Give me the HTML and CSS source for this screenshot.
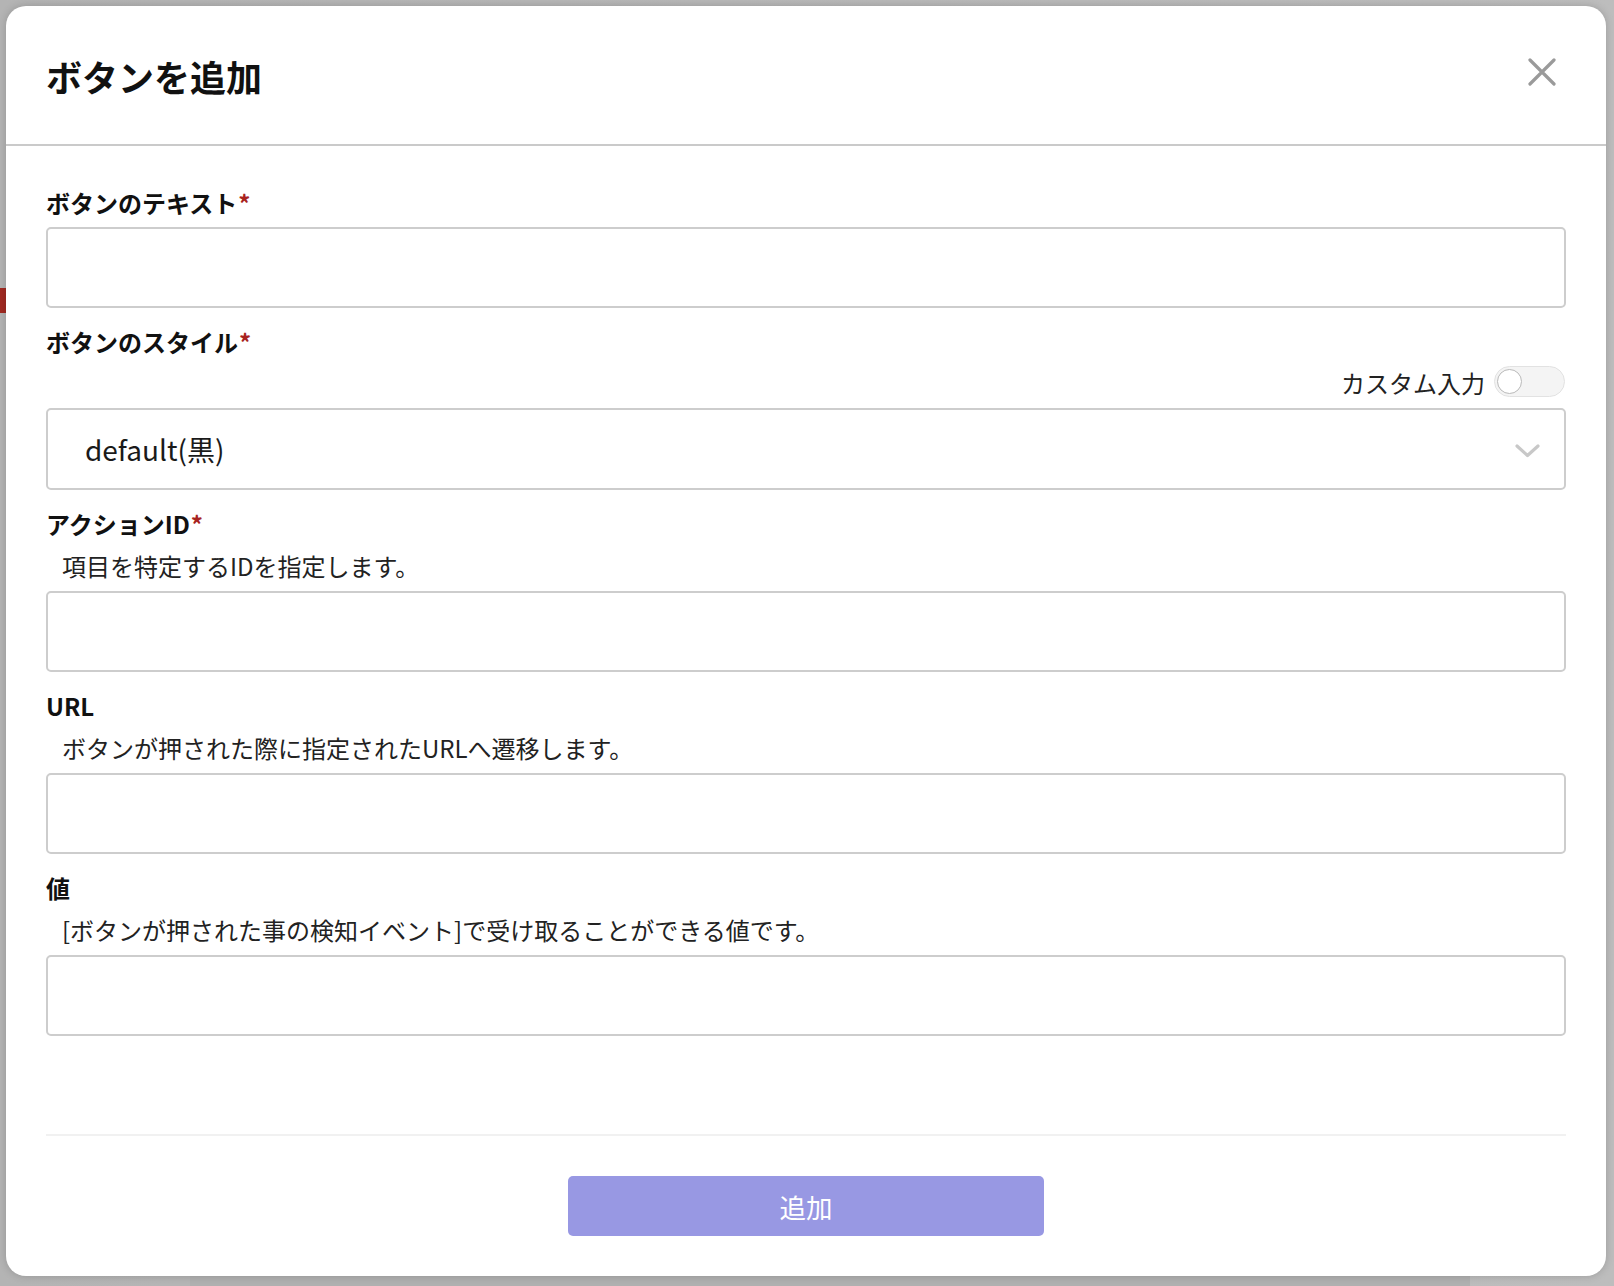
FILE: index.html
```html
<!DOCTYPE html>
<html lang="ja">
<head>
<meta charset="utf-8">
<title>ボタンを追加</title>
<link rel="stylesheet" href="styles.css">
</head>
<body>
<div class="backdrop">
  <div class="bg-badge"></div>
  <div class="bg-bottom"></div>
</div>
<div class="modal">
  <header class="modal-header">
    <h1 class="modal-title">ボタンを追加</h1>
    <button class="close-btn" aria-label="閉じる">
      <svg width="28" height="28" viewBox="0 0 28 28"><path d="M2 2 L26 26 M26 2 L2 26" stroke="#9a9a9a" stroke-width="3.2" stroke-linecap="round" fill="none"/></svg>
    </button>
  </header>
  <div class="modal-body">
    <div class="field first">
      <label class="label">ボタンのテキスト<span class="req">*</span></label>
      <div class="input"></div>
    </div>
    <div class="field">
      <label class="label">ボタンのスタイル<span class="req">*</span></label>
      <div class="toggle-row">
        <span class="toggle-text">カスタム入力</span>
        <span class="toggle"><span class="knob"></span></span>
      </div>
      <div class="select">
        <span class="select-value">default(黒)</span>
        <svg class="chevron" width="25" height="14" viewBox="0 0 25 14"><path d="M2 2 L12.5 11.5 L23 2" stroke="#c8c8c8" stroke-width="3.2" stroke-linecap="round" stroke-linejoin="round" fill="none"/></svg>
      </div>
    </div>
    <div class="field">
      <label class="label">アクションID<span class="req">*</span></label>
      <p class="desc">項目を特定するIDを指定します。</p>
      <div class="input"></div>
    </div>
    <div class="field">
      <label class="label">URL</label>
      <p class="desc">ボタンが押された際に指定されたURLへ遷移します。</p>
      <div class="input"></div>
    </div>
    <div class="field">
      <label class="label">値</label>
      <p class="desc">[ボタンが押された事の検知イベント]で受け取ることができる値です。</p>
      <div class="input"></div>
    </div>
  </div>
  <footer class="modal-footer">
    <button class="submit">追加</button>
  </footer>
</div>
</body>
</html>
```

FILE: styles.css
```css
* { box-sizing: border-box; }
html, body {
  margin: 0;
  padding: 0;
}
body {
  width: 1614px;
  height: 1286px;
  overflow: hidden;
  background: #b2b2b2;
  font-family: "Noto Sans CJK JP", "Noto Sans", sans-serif;
  color: #111;
  position: relative;
  padding: 6px 0 0 6px;
}
.backdrop {
  position: absolute;
  inset: 0;
  background: linear-gradient(90deg, #b4b4b4 0%, #bdbdbd 100%);
}
.bg-badge {
  position: absolute;
  left: 0;
  top: 288px;
  width: 6px;
  height: 25px;
  background: #a12a22;
}
.bg-bottom {
  position: absolute;
  left: 190px;
  width: 1280px;
  top: 1270px;
  height: 16px;
  background: #b0b0b0;
}
.modal {
  position: relative;
  width: 1600px;
  height: 1270px;
  background: #fff;
  border-radius: 20px;
  box-shadow: 0 0 8px rgba(0,0,0,0.18);
  display: flex;
  flex-direction: column;
}
.modal-header {
  height: 140px;
  border-bottom: 2px solid #cacaca;
  padding: 0 40px;
  display: flex;
  align-items: center;
  justify-content: space-between;
}
.modal-title {
  margin: 0;
  font-size: 36px;
  font-weight: 700;
  line-height: 1;
  padding-top: 2px;
  color: #111;
}
.close-btn {
  border: 0;
  background: none;
  padding: 0;
  margin-right: 10px;
  margin-top: -6px;
  width: 28px;
  height: 28px;
  display: flex;
}
.modal-body {
  padding: 40px 40px 0;
  display: flex;
  flex-direction: column;
}
.field {
  display: flex;
  flex-direction: column;
  margin-top: 17px;
}
.field.first { margin-top: 0; }
.label {
  font-size: 24px;
  font-weight: 700;
  line-height: 34px;
  color: #111;
}
.req {
  color: #a8231e;
  margin-left: 1px;
}
.desc {
  margin: 8px 0 0;
  padding-left: 16px;
  font-size: 24px;
  line-height: 34px;
  color: #222;
}
.input {
  margin-top: 7px;
  height: 81px;
  border: 2px solid #cdcdcd;
  border-radius: 5px;
  background: #fff;
}
.desc + .input { margin-top: 8px; }
.toggle-row {
  margin-top: 7px;
  display: flex;
  justify-content: flex-end;
  align-items: center;
  gap: 9px;
  height: 31px;
  padding-right: 1px;
}
.toggle-text {
  font-size: 24px;
  color: #222;
  line-height: 31px;
  padding-top: 2px;
}
.toggle {
  width: 71px;
  height: 31px;
  border-radius: 16px;
  background: #f4f4f4;
  border: 1.5px solid #e2e2e2;
  display: flex;
  align-items: center;
  padding-left: 2px;
}
.knob {
  width: 25px;
  height: 25px;
  border-radius: 50%;
  background: #fff;
  border: 1.5px solid #b9b9b9;
}
.select {
  margin-top: 11px;
  height: 82px;
  border: 2px solid #cdcdcd;
  border-radius: 5px;
  display: flex;
  align-items: center;
  justify-content: space-between;
  padding: 0 24px 0 37px;
}
.select-value {
  font-size: 28px;
  color: #1a1a1a;
  line-height: 1;
}
.chevron { margin-top: 4px; }
.modal-footer {
  margin: auto 40px 0;
  border-top: 2px solid #f1f1f1;
  padding: 40px 0 40px 0;
  display: flex;
  justify-content: center;
}
.submit {
  width: 476px;
  height: 60px;
  border: 0;
  border-radius: 5px;
  background: #9898e3;
  color: #fff;
  font-family: "Noto Sans CJK JP", "Noto Sans", sans-serif;
  font-size: 26.5px;
  padding: 0;
}
```
